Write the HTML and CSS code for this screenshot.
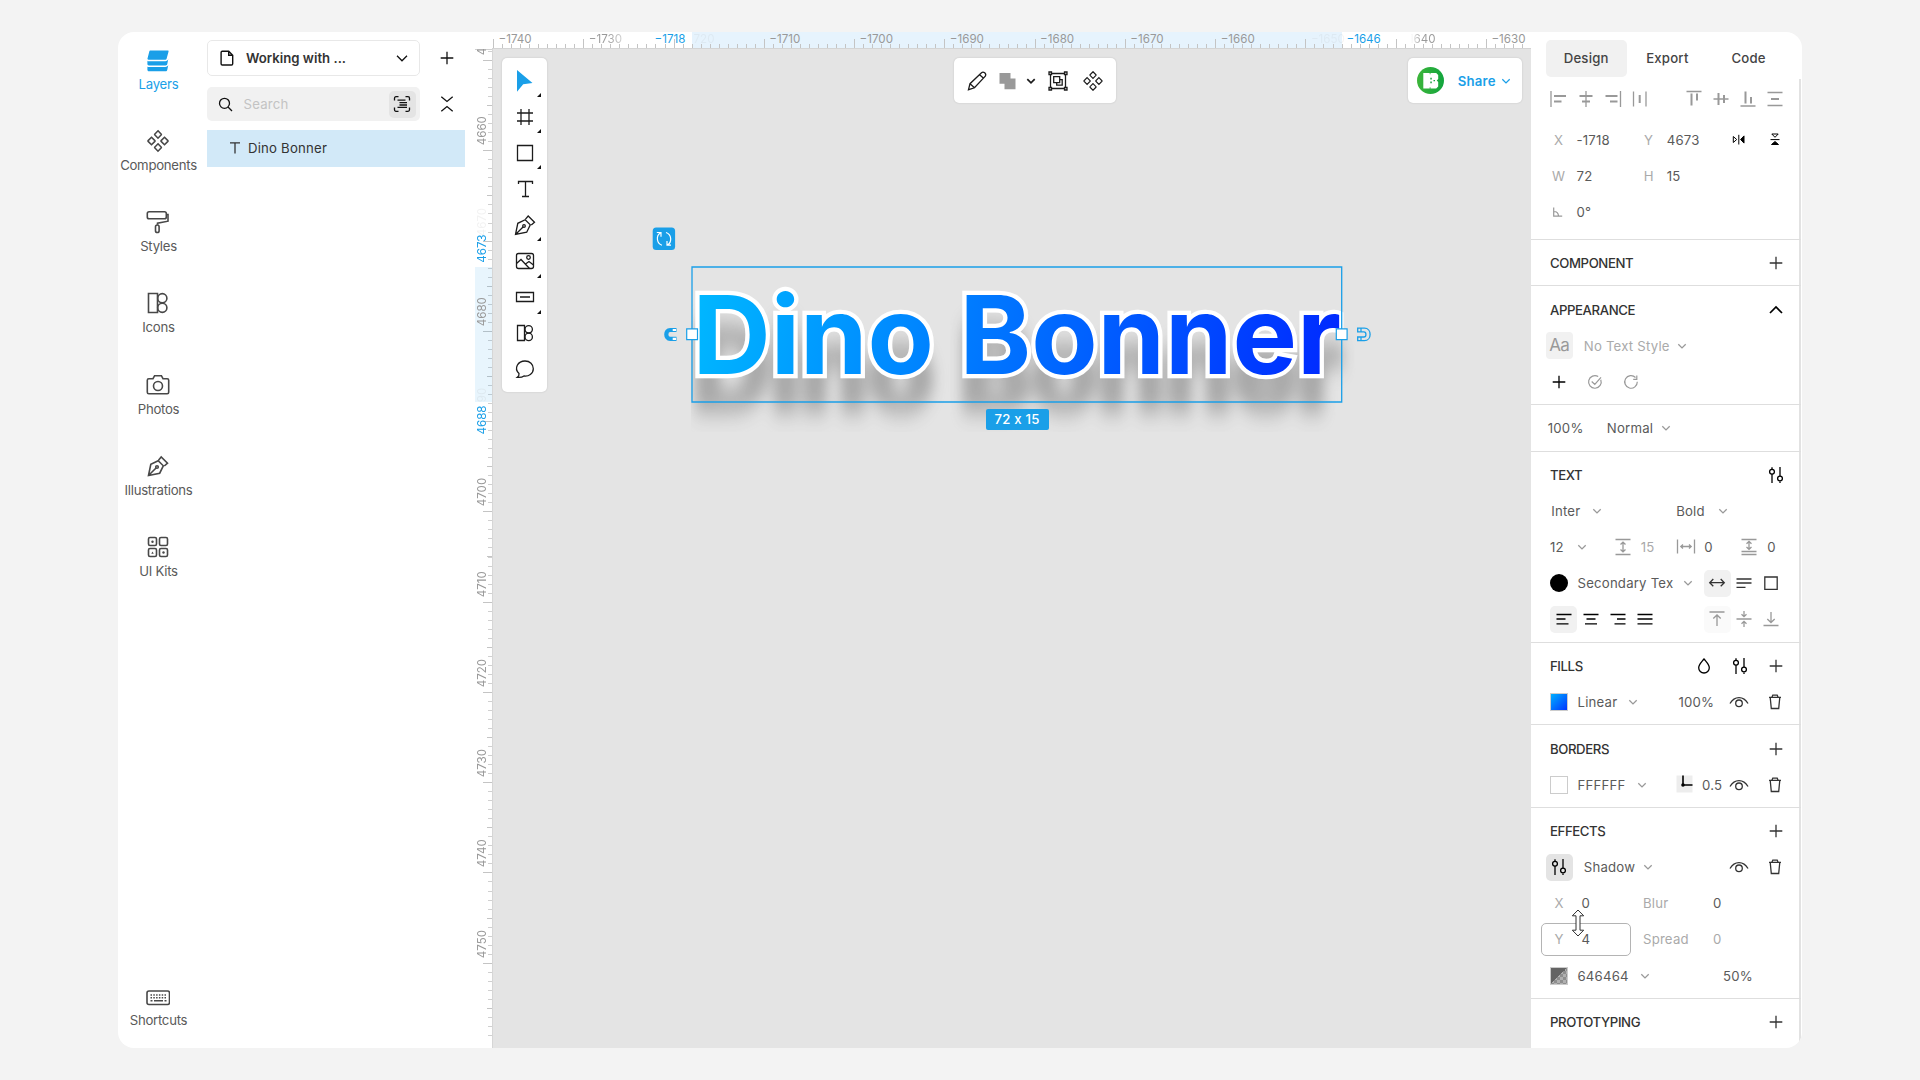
FILE: index.html
```html
<!DOCTYPE html>
<html lang="en">
<head>
<meta charset="utf-8">
<title>Working with text</title>
<link rel="stylesheet" href="styles.css">
</head>
<body>
<svg class="sprite" aria-hidden="true">
  <symbol id="plus" viewBox="0 0 24 24"><path d="M12 5.700v12.600M5.700 12h12.600"/></symbol>
  <symbol id="chev" viewBox="0 0 24 24"><path d="M8.300 10.200l3.700 3.700 3.700-3.700"/></symbol>
  <symbol id="chev-lg" viewBox="0 0 24 24"><path d="M7 9.800l5 5 5-5"/></symbol>
  <symbol id="chev-up" viewBox="0 0 24 24"><path d="M6 15l6-6 6 6" stroke-width="1.700"/></symbol>
  <symbol id="pen" viewBox="0 0 24 24"><path d="M2.500 21.500l2.300-11.200 7.400-3.600 5.100 5.100-3.600 7.400zM2.500 21.500l7.800-7.800M12.500 6.200l2.700-3.200 6.300 6.200-3.200 2.800"/><circle cx="11" cy="13" r="1.300"/></symbol>
  <symbol id="blocks" viewBox="0 0 24 24"><path d="M2.500 2.500h9v19h-9z"/><circle cx="16.300" cy="7.200" r="4.600"/><circle cx="16.300" cy="16.800" r="4.600"/></symbol>
  <symbol id="diamonds" viewBox="0 0 24 24"><path id="dm" d="M12 1.800l3.300 3.400v.600L12 9.200 8.700 5.800v-.6zM12 14.800l3.300 3.400v.6L12 22.200l-3.300-3.400v-.6zM5.500 8.300l3.400 3.400v.6L5.500 15.700 2.100 12.300v-.6zM18.500 8.300l3.400 3.400v.6l-3.400 3.400-3.400-3.400v-.6z"/></symbol>
  <symbol id="sliders" viewBox="0 0 24 24"><path d="M8 4.300v1.900M8 11v9M16 4v9.300M16 18.500V20"/><circle cx="8" cy="8.700" r="2.400"/><circle cx="16" cy="15.500" r="2.400"/></symbol>
  <symbol id="eye" viewBox="0 0 24 24"><path d="M3 13.500C7.500 5.600 16.500 5.600 21 13.500"/><circle cx="12" cy="13.300" r="3.300"/></symbol>
  <symbol id="trash" viewBox="0 0 24 24"><path d="M6 7.300h12M7.200 7.300l1.100 11.200h7.400l1.100-11.200M9 7l.8-1.900h4.400L15 7"/></symbol>
</svg>

<div class="app">
  <nav class="nav">
    <a class="nav-item active"><svg class="i nav-i" viewBox="0 0 24 24"><g fill="currentColor" stroke="none" transform="translate(0 1)"><path d="M4.500 1.500h17.200c.8 0 1 .5.800 1.200l-1.900 7c-.2.700-.6 1-1.300 1H2.500c-.9 0-1.200-.4-1-1.200l1.800-7c.2-.7.500-1 1.200-1z"/><path d="M1.400 11.700c.3.400.7.500 1.200.500h16.600c1.700 0 2.500-.8 3.100-2.200l-1 5c-.3 1-.8 1.400-1.700 1.400H2.900c-1 0-1.500-.5-1.500-1.400zM1.400 17.400c.3.400.7.500 1.200.500h16.600c1.700 0 2.500-.8 3.100-2.200l-1 5c-.3 1-.8 1.500-1.700 1.500H2.900c-1 0-1.500-.6-1.500-1.500z"/></g></svg>Layers</a>
    <a class="nav-item"><svg class="i nav-i"><use href="#diamonds"/></svg>Components</a>
    <a class="nav-item"><svg class="i nav-i" viewBox="0 0 24 24"><rect x="1.300" y="1.800" width="19" height="7" rx="1.800"/><path d="M20.300 4.500h1.700v6.700l-10.500 2v1.600"/><rect x="9.500" y="15" width="3.600" height="7.500" rx="1.800"/></svg>Styles</a>
    <a class="nav-item"><svg class="i nav-i"><use href="#blocks"/></svg>Icons</a>
    <a class="nav-item"><svg class="i nav-i" viewBox="0 0 24 24"><path d="M2.800 5.700h4.200l1.600-3h6.800l1.600 3h4.200c1 0 1.500.6 1.500 1.500v12c0 1-.6 1.500-1.500 1.500H2.800c-1 0-1.500-.6-1.500-1.500v-12c0-1 .6-1.500 1.500-1.500z"/><circle cx="12" cy="13" r="4.500"/></svg>Photos</a>
    <a class="nav-item"><svg class="i nav-i"><use href="#pen"/></svg>Illustrations</a>
    <a class="nav-item"><svg class="i nav-i" viewBox="0 0 24 24"><rect x="2.500" y="2.500" width="8" height="8" rx="1.500"/><rect x="13.500" y="2.500" width="8" height="8" rx="1.500"/><rect x="2.500" y="13.500" width="8" height="8" rx="1.500"/><rect x="13.500" y="13.500" width="8" height="8" rx="1.500"/><g fill="currentColor" stroke="none"><circle cx="6.500" cy="6.700" r="1.200"/><path d="M5.300 18.800L6.500 16.500l1.200 2.300z"/><circle cx="17.500" cy="17.500" r="1.200"/></g></svg>UI Kits</a>
    <a class="nav-item last"><svg class="i nav-i" viewBox="0 0 24 24"><rect x="1" y="5" width="22.500" height="13.500" rx="2"/><path d="M4.500 9h16M4.500 11.800h16" stroke-dasharray="1.500 1.300"/><path d="M4.500 14.800h2M8 14.800h9M18.500 14.800h2"/></svg>Shortcuts</a>
  </nav>

  <section class="layers">
    <div class="layers-row">
      <div class="doc-select">
        <svg class="i" viewBox="0 0 24 24"><path d="M7.300 5.200h6.400l4 4v8.600c0 .8-.4 1.200-1.200 1.200H7.300c-.8 0-1.200-.4-1.200-1.200V6.400c0-.8.4-1.200 1.200-1.200zM13.700 5.500v3.700h3.700" stroke-width="1.400"/></svg>
        <span class="doc-name">Working with ...</span>
        <svg class="i" stroke-width="1.500"><use href="#chev-lg"/></svg>
      </div>
      <svg class="i"><use href="#plus"/></svg>
    </div>
    <div class="layers-row search-row">
      <div class="search">
        <svg class="i" viewBox="0 0 24 24"><circle cx="11.500" cy="11.300" r="5"/><path d="M15 15l4 4"/></svg>
        <span class="placeholder">Search</span>
        <span class="scan"><svg class="i" viewBox="0 0 24 24"><path d="M4.500 8.500V6.200c0-.8.600-1.500 1.500-1.500h2.500M15.500 4.700H18c.9 0 1.500.7 1.500 1.500v2.300M19.500 15.500v2.300c0 .8-.6 1.500-1.500 1.500h-2.500M8.500 19.300H6c-.9 0-1.500-.7-1.500-1.500v-2.300M7.500 8.200h8M9.500 10.600h7.500M9.500 13.000h7.500M7.500 15.400h9.500" stroke-width="1.300"/></svg></span>
      </div>
      <svg class="i" viewBox="0 0 24 24"><path d="M6.300 4.800L12 9.500l5.700-4.700M6.300 19.200L12 14.500l5.700 4.700"/></svg>
    </div>
    <div class="layer">
      <svg class="i" viewBox="0 0 24 24"><path d="M7 6.800h10M12 6.800v10.700" stroke-width="1.300"/></svg>Dino Bonner
    </div>
  </section>

  <aside class="vruler">
    <div class="vticks"></div>
    <div class="vsel"></div>
    <div class="vlabels"><span class="first">4</span><span>4660</span><span class="ghost">4670</span><span>4680</span><span class="ghost tail">90</span><span>4700</span><span>4710</span><span>4720</span><span>4730</span><span>4740</span><span>4750</span></div>
    <b class="vmark vmark-a">4673</b><b class="vmark vmark-b">4688</b>
  </aside>

  <main class="stage">
    <div class="hruler">
      <div class="hsel"></div>
      <div class="hticks"></div>
      <div class="hlabels"><span>−1740</span><span class="fade-end">−1730</span><span class="ghost cut">720</span><span>−1710</span><span>−1700</span><span>−1690</span><span>−1680</span><span>−1670</span><span>−1660</span><span class="ghost">−1650</span><span class="fade-start">−1640</span><span>−1630</span></div>
      <b class="hmark hmark-a">−1718</b><b class="hmark hmark-b">−1646</b>
    </div>
    <div class="canvas">
      <svg class="art" viewBox="492 49 1039 999">
        <defs>
          <linearGradient id="fill" gradientUnits="userSpaceOnUse" x1="694" y1="290" x2="1340" y2="425"><stop offset="0" stop-color="#00b8ff"/><stop offset="1" stop-color="#0026ff"/></linearGradient>
          <filter id="soft" filterUnits="userSpaceOnUse" x="670" y="280" width="700" height="180"><feGaussianBlur stdDeviation="6.500 11"/></filter>
          <clipPath id="cut"><path d="M691 260h665v172H691z"/></clipPath>
        </defs>
        <g clip-path="url(#cut)"><text class="title title-shadow" x="692.500" y="408" filter="url(#soft)" aria-hidden="true">Dino Bonner</text></g>
        <text class="title title-main" x="692.500" y="373.700">Dino Bonner</text>
        <g fill="none" stroke="#1a9fe8">
          <path d="M692 267h649.700v135H692z" stroke-width="1.300"/>
          <g fill="#fff" stroke-width="1.200"><path d="M686.700 328.900h10.800v10.800h-10.800zM1336.300 328.900h10.800v10.800h-10.800z"/></g>
          <path d="M676.500 330h-6.300c-5.200 0-5.200 8.800 0 8.800h6.300" stroke-width="4.200"/>
          <path d="M672.700 330h3.300M672.700 338.800h3.300" stroke="#fff" stroke-width="2.200"/>
          <path d="M1357.700 328.200h6.700c7.600 0 7.600 12.400 0 12.400h-6.700v-3.600h6.200c2.700 0 2.700-5.200 0-5.200h-6.200zM1361 328.200v3.600M1361 337v3.600" stroke-width="1.300"/>
        </g>
        <rect x="652.700" y="227.600" width="22.400" height="22.400" rx="3.500" fill="#1a9fe8"/>
        <g fill="none" stroke="#fff" stroke-width="1.200"><path d="M660.500 232.800a7 7 0 0 0 1.500 12.400M667.500 245a7 7 0 0 0-1.500-12.500M656.800 232.500h4.200v4.200M671 245.200h-4v-4.200"/></g>
      </svg>
      <div class="size-tag">72 x 15</div>
      <div class="bar tools">
        <span class="tool more"><svg class="i" viewBox="0 0 24 24"><path d="M4 1l15.500 13-9.300 1.300L4 22.800z" fill="#1a9fe8" stroke="none"/></svg></span>
        <span class="tool more"><svg class="i" viewBox="0 0 24 24"><path d="M8 4v16M16 4v16M4 8h16M4 16h16"/></svg></span>
        <span class="tool more"><svg class="i" viewBox="0 0 24 24"><path d="M4.500 4.500h15v15h-15z"/></svg></span>
        <span class="tool"><svg class="i" viewBox="0 0 24 24"><path d="M5.500 7V4.500h14V7M12.500 4.500v15M9 19.500h7"/></svg></span>
        <span class="tool more"><svg class="i"><use href="#pen"/></svg></span>
        <span class="tool more"><svg class="i" viewBox="0 0 24 24"><rect x="3.500" y="4.500" width="17" height="15" rx="2"/><circle cx="15.500" cy="8.500" r="1.800"/><path d="M3.500 14.500L8 10.500l8.500 9M12.500 15l3.500-2.500 4.500 3.500"/></svg></span>
        <span class="tool more"><svg class="i" viewBox="0 0 24 24"><path d="M3.500 7.500h17v9h-17zM7 12h10"/></svg></span>
        <span class="tool"><svg class="i" viewBox="0 0 24 24"><path d="M4.500 4.500h7v15h-7z"/><circle cx="15.700" cy="8.300" r="3.700"/><circle cx="15.700" cy="15.900" r="3.700"/></svg></span>
        <span class="tool"><svg class="i" viewBox="0 0 24 24"><path d="M6 16.500C.500 11 5 4 12 4c5 0 8.300 3.500 8.300 7.700 0 5-4.800 8-9.300 7.300-2 1.500-4.500 1.600-6.700 1.400C5.800 19.400 6.200 18 6 16.500z"/></svg></span>
      </div>
      <div class="bar actions">
        <svg class="i" viewBox="0 0 24 24"><path d="M3.500 20.700l1.500-6 11.500-11c2-1.700 5.300 1 3.800 3.400L9.500 18.800zM5 14.700l4.500 4M14.600 5.700l4 3.600"/></svg>
        <svg class="i" viewBox="0 0 24 24"><path d="M3.500 4h11v5.500h5v10.800h-11v-5.500h-5z" fill="#999" stroke="none"/></svg>
        <svg class="i dd"><use href="#chev"/></svg>
        <svg class="i grp" viewBox="0 0 24 24"><path d="M4.500 4.500h15v15h-15z"/><path d="M7.700 7.700h6v6h-6zM13.700 10.700h2.500v5.500h-5.500v-2.500"/><path d="M3 3h2.500v2.500H3zM18.500 3H21v2.500h-2.500zM3 18.500h2.500V21H3zM18.500 18.500H21V21h-2.500z" fill="#fff"/></svg>
        <svg class="i dmn" viewBox="1 1 22 22"><use href="#dm"/></svg>
      </div>
      <div class="bar share">
        <svg class="avatar" viewBox="0 0 27 27"><defs><linearGradient id="green"><stop offset="0" stop-color="#3db53a"/><stop offset="1" stop-color="#12a53e"/></linearGradient></defs><circle cx="13.500" cy="13.500" r="13.500" fill="url(#green)"/><path d="M6.300 6h6.400v1.200h.800V6h5.700l2 2v4l-1.500 1.500 1.500 1.500v4.500l-2 2h-5.700v-1.200h-.8v1.200H6.300z" fill="#fff"/><path d="M13.300 10.800h1.500v1.700h-1.500zM13.300 14.600h1.500v1.700h-1.500zM16.500 12.900h1.500v1.300h-1.500z" fill="#18a53e"/></svg>
        <span>Share</span>
        <svg class="i"><use href="#chev"/></svg>
      </div>
    </div>
  </main>

  <aside class="panel">
    <div class="tabs"><span class="tab on">Design</span><span class="tab">Export</span><span class="tab">Code</span></div>
    <div class="panel-body">
      <section class="sec first-sec">
        <div class="row r-align gray">
          <svg class="i" viewBox="0 0 24 24"><path d="M4 4v16"/><path d="M7 9h12M7 14.500h7.500" stroke-width="2"/></svg>
          <svg class="i" viewBox="0 0 24 24"><path d="M12 4v16"/><path d="M5.500 9h13M8 14.500h8" stroke-width="2"/></svg>
          <svg class="i" viewBox="0 0 24 24"><path d="M19.500 4v16"/><path d="M4.500 9h12M9 14.500h7.500" stroke-width="2"/></svg>
          <svg class="i" viewBox="0 0 24 24"><path d="M5.500 4.500v15M18 4.500v15"/><path d="M11.700 8v8" stroke-width="2"/></svg>
          <i></i>
          <svg class="i" viewBox="0 0 24 24"><path d="M4.500 4.500h15"/><path d="M9.500 6.500v12M15 6.500v7" stroke-width="2"/></svg>
          <svg class="i" viewBox="0 0 24 24"><path d="M4.500 12h15"/><path d="M9.500 6v12M15 8v8" stroke-width="2"/></svg>
          <svg class="i" viewBox="0 0 24 24"><path d="M4.500 19h15"/><path d="M9.500 4.500v12M15 10v6.500" stroke-width="2"/></svg>
          <svg class="i" viewBox="0 0 24 24"><path d="M4.500 5.500h15M4.500 18.500h15"/><path d="M8 12h8" stroke-width="2"/></svg>
        </div>
        <div class="row r-pos">
          <em>X</em><span>-1718</span><em>Y</em><span>4673</span>
          <svg class="i" viewBox="0 0 24 24"><path d="M6.300 8.500v6l3.400-3zM11.800 6.800v9.700" stroke-width="1"/><path d="M17 7.900v7.200l-3.400-3.600z" fill="currentColor" stroke-width="1"/></svg><i></i>
          <svg class="i" viewBox="0 0 24 24"><path d="M8.800 6h6.400L12 9.300zM7.500 11.600h9" stroke-width="1"/><path d="M8.500 16.500h7L12 13.500z" fill="currentColor" stroke-width="1"/></svg>
        </div>
        <div class="row r-pos"><em>W</em><span>72</span><em>H</em><span>15</span></div>
        <div class="row r-pos"><svg class="i gray" viewBox="0 0 24 24"><path d="M7.700 7.500v8.700h8.500M8 11.500c3 0 4.300 1.500 4.500 4.500" stroke-width="1.200"/></svg><span>0°</span></div>
      </section>

      <section class="sec"><div class="row head"><h3>COMPONENT</h3><svg class="i"><use href="#plus"/></svg></div></section>

      <section class="sec">
        <div class="row head"><h3>APPEARANCE</h3><svg class="i blk"><use href="#chev-up"/></svg></div>
        <div class="row r-style gray"><b class="aa">Aa</b><span>No Text Style</span><svg class="i"><use href="#chev"/></svg></div>
        <div class="row r-acts"><svg class="i blk"><use href="#plus"/></svg>
          <svg class="i gray" viewBox="0 0 24 24"><path d="M17.800 9.800A6.300 6.300 0 1 1 15.200 6.600M8.700 11.500l3.100 3 6.200-7.200" stroke-width="1.200"/></svg>
          <svg class="i gray" viewBox="0 0 24 24"><path d="M16.500 7.500A6.300 6.300 0 1 0 18.300 11.800M17.800 5.500v3.800h-3.600" stroke-width="1.200"/></svg></div>
      </section>

      <section class="sec"><div class="row r-blend"><span>100%</span><span>Normal</span><svg class="i gray"><use href="#chev"/></svg></div></section>

      <section class="sec">
        <div class="row head"><h3>TEXT</h3><svg class="i blk"><use href="#sliders"/></svg></div>
        <div class="row r-font"><span>Inter</span><svg class="i gray"><use href="#chev"/></svg><span>Bold</span><svg class="i gray"><use href="#chev"/></svg></div>
        <div class="row r-size"><span>12</span><svg class="i gray"><use href="#chev"/></svg>
          <svg class="i gray" viewBox="0 0 24 24"><path d="M4.500 4.500h15M4.500 19.500h15M12 7.500v9M9.500 9.500L12 7.200l2.500 2.300M9.500 14.500l2.500 2.300 2.500-2.300"/></svg><span class="dim">15</span>
          <svg class="i gray" viewBox="0 0 24 24"><path d="M3.500 4.500v14M20.500 4.500v14M7 11.500h10M9 9.500l-2.200 2L9 13.500M15 9.500l2.200 2-2.200 2"/></svg><span>0</span>
          <svg class="i gray" viewBox="0 0 24 24"><path d="M4.500 4.500h15M4.500 16.500h15M4.500 19.500h15M12 6.500v8M9.500 8.700L12 6.400l2.500 2.300M9.500 12l2.500 2.300 2.500-2.300"/></svg><span>0</span></div>
        <div class="row r-color"><i class="dot"></i><span>Secondary Tex</span><svg class="i gray"><use href="#chev"/></svg>
          <b class="cell on"><svg class="i" viewBox="0 0 24 24"><path d="M5 11.700h14M8.300 8L4.700 11.700l3.600 3.600M15.700 8l3.600 3.700-3.600 3.600"/></svg></b>
          <b class="cell"><svg class="i" viewBox="0 0 24 24"><path d="M4.500 8h15M4.500 12h15M4.500 16.300h9"/></svg></b>
          <b class="cell"><svg class="i" viewBox="0 0 24 24"><path d="M5.800 6h12.400v12.400H5.800z"/></svg></b></div>
        <div class="row r-para blk">
          <b class="cell on"><svg class="i" viewBox="0 0 24 24"><path d="M4.500 7.500h15M4.500 16.800h12M4.500 12h9"/></svg></b>
          <b class="cell"><svg class="i" viewBox="0 0 24 24"><path d="M4.500 7.500h15M6 16.800h12M7.500 12h9"/></svg></b>
          <b class="cell"><svg class="i" viewBox="0 0 24 24"><path d="M4.500 7.500h15M8.500 16.800h11M11 12h8.500"/></svg></b>
          <b class="cell"><svg class="i" viewBox="0 0 24 24"><path d="M4.500 7.500h15M4.500 12h15M4.500 16.800h15"/></svg></b><i></i>
          <b class="cell faint gray"><svg class="i" viewBox="0 0 24 24"><path d="M4.500 5h15M12 19V8M8.300 11.500L12 8l3.700 3.500"/></svg></b>
          <b class="cell gray"><svg class="i" viewBox="0 0 24 24"><path d="M4.500 12h15M12 4v5.500M9.500 7.300l2.500 2.400 2.500-2.400M12 20v-5.500M9.500 16.700l2.500-2.400 2.500 2.400"/></svg></b>
          <b class="cell gray"><svg class="i" viewBox="0 0 24 24"><path d="M4.500 18.500h15M12 5v10.500M8.300 12l3.700 3.500 3.700-3.500"/></svg></b></div>
      </section>

      <section class="sec">
        <div class="row head"><h3>FILLS</h3><svg class="i blk" viewBox="0 0 24 24"><path d="M12 5c3 3.600 5.300 5.500 5.300 8.700a5.300 5.300 0 0 1-10.600 0C6.700 10.500 9 8.600 12 5z"/></svg><svg class="i blk"><use href="#sliders"/></svg><svg class="i"><use href="#plus"/></svg></div>
        <div class="row r-paint p-linear"><i class="sw sw-lin"></i><span>Linear</span><svg class="i gray"><use href="#chev"/></svg><span class="val">100%</span><svg class="i"><use href="#eye"/></svg><i></i><svg class="i"><use href="#trash"/></svg></div>
      </section>

      <section class="sec">
        <div class="row head"><h3>BORDERS</h3><svg class="i"><use href="#plus"/></svg></div>
        <div class="row r-paint p-border"><i class="sw"></i><span>FFFFFF</span><svg class="i gray"><use href="#chev"/></svg><svg class="i blk" viewBox="0 0 24 24"><path d="M4.500 2.500h16v17h-16z" fill="#ededed" stroke="none"/><path d="M11 2.500V12h9.500" stroke-width="1.600"/><circle cx="11" cy="12" r="1.800" fill="currentColor" stroke="none"/></svg><span class="val">0.5</span><svg class="i"><use href="#eye"/></svg><i></i><svg class="i"><use href="#trash"/></svg></div>
      </section>

      <section class="sec">
        <div class="row head"><h3>EFFECTS</h3><svg class="i"><use href="#plus"/></svg></div>
        <div class="row r-shadow"><b class="cell on dark"><svg class="i blk"><use href="#sliders"/></svg></b><span>Shadow</span><svg class="i gray"><use href="#chev"/></svg><svg class="i"><use href="#eye"/></svg><i></i><svg class="i"><use href="#trash"/></svg></div>
        <div class="row r-num"><div class="field"><em>X</em><span>0</span></div><span class="lab">Blur</span><span>0</span></div>
        <div class="row r-num"><div class="field boxed"><em>Y</em><span>4</span>
          <svg class="cursor" viewBox="0 0 14 28"><path d="M7 1L1.300 6.800H5v14.400H1.300L7 27l5.700-5.800H9V6.800h3.700z" fill="#fff" stroke="#333" stroke-width="1"/></svg></div><span class="lab">Spread</span><span class="lab">0</span></div>
        <div class="row r-paint p-hex"><i class="sw sw-alpha"></i><span>646464</span><svg class="i gray"><use href="#chev"/></svg><span class="val">50%</span></div>
      </section>

      <section class="sec last-sec"><div class="row head"><h3>PROTOTYPING</h3><svg class="i"><use href="#plus"/></svg></div></section>
    </div>
  </aside>
</div>
</body>
</html>
```
FILE: styles.css
```css
* { box-sizing: border-box; }
html, body { height: 100%; }
body {
  margin: 0;
  background: #f3f3f3;
  font-family: Inter, "Liberation Sans", sans-serif;
  font-size: 13.2px;
  letter-spacing: .2px;
  color: #5a5a5a;
  overflow: hidden;
  padding: 32px 118px;
}
.sprite { display: none; }
.i {
  width: 24px;
  height: 24px;
  flex: none;
  fill: none;
  stroke: currentColor;
  stroke-width: 1.3;
}
i, em, b { font-style: normal; font-weight: inherit; }
.gray { color: #999; }
.blk { color: #000; }

.app {
  display: flex;
  width: 1684px;
  height: 1016px;
  background: #fff;
  border-radius: 16px;
  overflow: hidden;
}

/* Navigation rail */
.nav {
  width: 81px;
  display: flex;
  flex-direction: column;
  padding: 16px 0 16.500px;
}
.nav-item {
  height: 81.150px;
  display: flex;
  flex-direction: column;
  align-items: center;
  gap: 4px;
  line-height: 17px;
  letter-spacing: -.28px;
  white-space: nowrap;
}
.nav-i { stroke-width: 1.600; color: #484848; margin-left: -1.500px; }
.nav-item.active, .nav-item.active .nav-i { color: #1a9fe8; }
.nav-item.last { margin-top: auto; height: 46px; gap: 2px; }
.nav-item.last .nav-i { margin-left: -.500px; }

/* Layers panel */
.layers { width: 275.500px; padding: 8px 0 0 8px; color: #111; }
.layers-row { display: flex; align-items: center; gap: 14.500px; }
.search-row { margin-top: 11px; }
.doc-select {
  width: 213px;
  height: 36px;
  border: 1.500px solid #e8e8e8;
  border-radius: 5px;
  display: flex;
  align-items: center;
  padding: 0 5px 0 7px;
}
.doc-name { flex: 1; padding-left: 7px; font-weight: 600; color: #333; letter-spacing: 0; }
.search {
  width: 213px;
  height: 34px;
  background: #f1f1f1;
  border-radius: 5px;
  display: flex;
  align-items: center;
  padding: 0 4.500px 0 5.500px;
}
.placeholder { flex: 1; padding-left: 7px; color: #c3c3c3; }
.scan {
  width: 27px;
  height: 27px;
  display: grid;
  place-items: center;
  background: #e4e4e4;
  border-radius: 5px;
}
.layer {
  width: 257.500px;
  height: 36.500px;
  margin-top: 9px;
  padding-left: 15.500px;
  background: #d2e9f8;
  display: flex;
  align-items: center;
  gap: 1.500px;
  color: #333;
}

/* Rulers */
.vruler {
  width: 17.500px;
  margin-top: 17px;
  position: relative;
  overflow: hidden;
  font-size: 11.600px;
  letter-spacing: 0;
  color: #999;
}
.vticks {
  position: absolute;
  inset: 0 0 12px 0;
  background:
    repeating-linear-gradient(to bottom, #c4c4c4 0 1px, transparent 1px 90.270px) right 0 top 9.800px / 9px 100% no-repeat,
    repeating-linear-gradient(to bottom, #c4c4c4 0 1px, transparent 1px 45.135px) right 0 top 9.800px / 5.500px 100% no-repeat,
    repeating-linear-gradient(to bottom, #d0d0d0 0 1px, transparent 1px 9.027px) right 0 top .800px / 4px 100% no-repeat;
  border-top: 1px solid #d0d0d0;
}
.vsel { position: absolute; left: 0; right: 0; top: 217.700px; height: 135.400px; background: rgba(26, 159, 232, .1); }
.vlabels { display: flex; flex-direction: column; }
.vlabels span, .vmark {
  writing-mode: vertical-rl;
  transform: rotate(180deg);
  height: 90.270px;
  line-height: 15px;
  padding-top: 3.500px;
}
.vlabels .first { height: 10.300px; padding-top: 4px; }
.vlabels .ghost { opacity: .12; }
.vlabels .tail { padding-top: 18px; }
.vlabels span, .vmark { position: relative; }
.vmark.vmark { position: absolute; left: 0; height: auto; color: #1a9fe8; }
.vmark-a { bottom: 781.500px; }
.vmark-b { bottom: 609.500px; }

.stage { width: 1039.300px; display: flex; flex-direction: column; }
.hruler {
  height: 17px;
  position: relative;
  border-bottom: 1px solid #d4d4d4;
  overflow: hidden;
  font-size: 11.600px;
  color: #999;
  letter-spacing: 0;
}
.hticks {
  position: absolute;
  inset: 0;
  background:
    repeating-linear-gradient(to right, #c4c4c4 0 1px, transparent 1px 90.270px) 1.100px bottom / 100% 9px no-repeat,
    repeating-linear-gradient(to right, #c4c4c4 0 1px, transparent 1px 9.027px) 1.100px bottom / 100% 4px no-repeat;
}
.hsel { position: absolute; top: 0; bottom: 0; left: 200px; width: 650px; background: #e6f3fd; }
.hlabels { position: relative; display: flex; }
.hlabels span { flex: none; width: 90.270px; padding-left: 6.500px; line-height: 15px; }
.hlabels .ghost { opacity: .1; }
.hlabels .cut { padding-left: 21px; }
.hlabels .fade-start { background: linear-gradient(to right, transparent 16px, #999 26px); -webkit-background-clip: text; background-clip: text; color: transparent; }
.hlabels .fade-end { background: linear-gradient(to right, #999 26px, #ccc 38px); -webkit-background-clip: text; background-clip: text; color: transparent; }
.hmark { position: absolute; top: 0; line-height: 15px; color: #1a9fe8; }
.hmark-a { left: 162.500px; }
.hmark-b { left: 854.500px; }

/* Canvas */
.canvas { flex: 1; position: relative; background: #e4e4e4; border-left: 1px solid #d6d6d6; }
.art { position: absolute; top: 0; left: -1px; width: 1039px; height: 999px; }
.title { font-family: Inter, sans-serif; font-weight: 700; font-size: 108.300px; letter-spacing: 0; }
.title-main { fill: url(#fill); stroke: #fff; stroke-width: 8.600px; paint-order: stroke; stroke-linejoin: miter; stroke-miterlimit: 3; }
.title-shadow { fill: #646464; stroke: #646464; stroke-width: 8.600px; opacity: .46; }
.size-tag {
  position: absolute;
  left: 492.500px;
  top: 360px;
  width: 63px;
  height: 20.500px;
  line-height: 20.500px;
  text-align: center;
  color: #fff;
  font-weight: 500;
  background: #1a9fe8;
  border-radius: 2px;
}
.bar { position: absolute; top: 9px; background: #fff; border-radius: 5px; box-shadow: 0 0 2px rgba(0, 0, 0, .16); color: #1c1c1c; }
.tools { left: 9.200px; width: 45px; padding: 4.500px 0; display: flex; flex-direction: column; align-items: center; }
.tool { position: relative; width: 45px; height: 36.100px; display: grid; place-items: center; }
.tool.more::after { content: ""; position: absolute; right: 6px; bottom: 1.500px; border: 2px solid #111; border-left-color: transparent; border-top-color: transparent; }
.actions { left: 461px; width: 162px; height: 45px; display: flex; align-items: center; padding: 0 9px 0 10.500px; gap: 7.500px; }
.actions .dd { margin: 0 -6px 0 -8.500px; stroke-width: 1.700; }
.actions .grp { margin-left: 1px; }
.actions .dmn { width: 20px; height: 20px; margin-left: 6px; }
.share { left: 914.800px; width: 114px; height: 45px; display: flex; align-items: center; padding-left: 9.500px; color: #1a9fe8; font-weight: 600; }
.avatar { width: 27px; height: 27px; margin-right: 13.500px; }
.share .i { margin-left: -2px; }

/* Inspector */
.panel { width: 270.500px; display: flex; flex-direction: column; }
.tabs { display: grid; grid-template-columns: repeat(3, 81.200px); padding: 8px 0 0 14.300px; }
.tab { height: 36.500px; line-height: 36.500px; text-align: center; color: #444; font-weight: 500; border-radius: 5px; }
.tab.on { background: #f1f1f1; }
.panel-body { flex: 1; width: 269.500px; margin: 2px 0 8px; border-right: 2px solid #e2e2e2; color: #333; }
.sec { padding: 5.300px 10px 4.160px 13.700px; border-bottom: 1px solid #dedede; margin-right: -2.500px; }
.first-sec { padding-top: 2.500px; padding-bottom: 8.500px; }
.first-sec .row:first-child { height: 36px; }
.first-sec .row:nth-child(2) { margin-top: 5px; }
.last-sec { border-bottom: 0; }
.row { height: 36.100px; display: grid; align-items: center; white-space: nowrap; }
.row > .i, .row > .cell .i, .row > .cell, .row > .aa, .row > em { justify-self: center; }
.row span { color: #5a5a5a; }
.row em, .row .lab, .row .dim { color: #aaa; }
.row.gray span { color: #aaa; }
.head { display: flex; gap: 12.100px; padding-right: 3px; }
.head h3 { flex: 1; margin: 0; padding-left: 5px; font-size: 13.200px; font-weight: 500; letter-spacing: -.4px; color: #333; }
.r-align { grid-template-columns: repeat(9, 27.080px); }
.r-pos { grid-template-columns: 27px 63.200px 27px 63.300px 27px 9px 27px; color: #000; }
.r-pos span { padding-left: 4.500px; }
.r-style, .r-acts, .r-blend, .r-shadow { padding-left: .800px; }
.r-style { grid-template-columns: 27px 96px 27px; }
.r-style span { padding-left: 11px; }
.aa { width: 27px; height: 27px; line-height: 27px; text-align: center; background: #f1f1f1; border-radius: 4px; font-size: 17px; letter-spacing: -.5px; }
.r-acts { grid-template-columns: 27px 27px 27px; gap: 9px; }
.r-blend { grid-template-columns: 61px 45.500px 27px; }
.r-blend span:first-child { padding-left: 2px; }
.r-font { grid-template-columns: 32.500px 27px 99px 27px; padding-left: 6.200px; }
.r-font span:nth-child(3) { padding-left: 65.500px; }
.r-size { grid-template-columns: 23.500px 41.250px 27px 35.500px 27px 36px 27px 20px; }
.r-size span { padding-left: 5px; }
.r-size > .i:nth-child(2), .r-color > .i:nth-child(3) { justify-self: start; margin-left: 1.500px; }
.r-size .dim { padding-left: 4px; }
.r-color { grid-template-columns: 27px 103px 28.800px 27px 27px 27px; }
.r-color span, .r-paint span { padding-left: 5.500px; }
.r-para { grid-template-columns: 27.080px 27.080px 27.080px 27.080px 45.500px repeat(3, 27.080px); padding-left: 5px; }
.cell { width: 27px; height: 27px; display: grid; place-items: center; border-radius: 5px; }
.cell.on { background: #f1f1f1; }
.cell.faint { background: #fafafa; }
.cell.dark { background: #e4e4e4; }
.dot { width: 18px; height: 18px; margin-left: 5px; border-radius: 50%; background: #000; }
.sw { width: 18px; height: 18px; margin-left: 5.300px; background: #fff; border: 1px solid #ccc; }
.sw-lin { background: linear-gradient(135deg, #00b0ff, #0034ff); }
.sw-alpha { background: linear-gradient(135deg, #646464 50%, transparent 50%), conic-gradient(#8e8e8e 25%, #b0b0b0 0 50%, #8e8e8e 0 75%, #b0b0b0 0) 0 0 / 6px 6px; }
.p-linear { grid-template-columns: 27px 47.500px 27px 79.500px 27px 9px 27px; }
.p-linear .val { padding-left: 32px; }
.p-border { grid-template-columns: 27px 56.500px 27px 17px 53.500px 27px 9px 27px; }
.p-border > .i:nth-child(4) { margin-left: 40px; }
.p-border .val { padding-left: 29.500px; }
.p-hex { grid-template-columns: 27px 60px 27px 80px; }
.p-hex .val { padding-left: 64px; }
.r-shadow { grid-template-columns: 27px 62px 27px 64px 27px 9px 27px; }
.r-shadow span { padding-left: 11px; }
.r-shadow > .i:nth-child(4) { grid-column: 5; }
.r-shadow > i { grid-column: 6; }
.r-num { grid-template-columns: 98px 70px 40px; }
.field { position: relative; display: flex; align-items: center; width: 90px; height: 33.500px; margin-left: -4px; padding-left: 12.500px; border: 1.300px solid transparent; border-radius: 5px; }
.field em { width: 27px; }
.boxed { border-color: #b4b4b4; }
.cursor { position: absolute; left: 29px; top: -15px; width: 14px; height: 28px; }
```
